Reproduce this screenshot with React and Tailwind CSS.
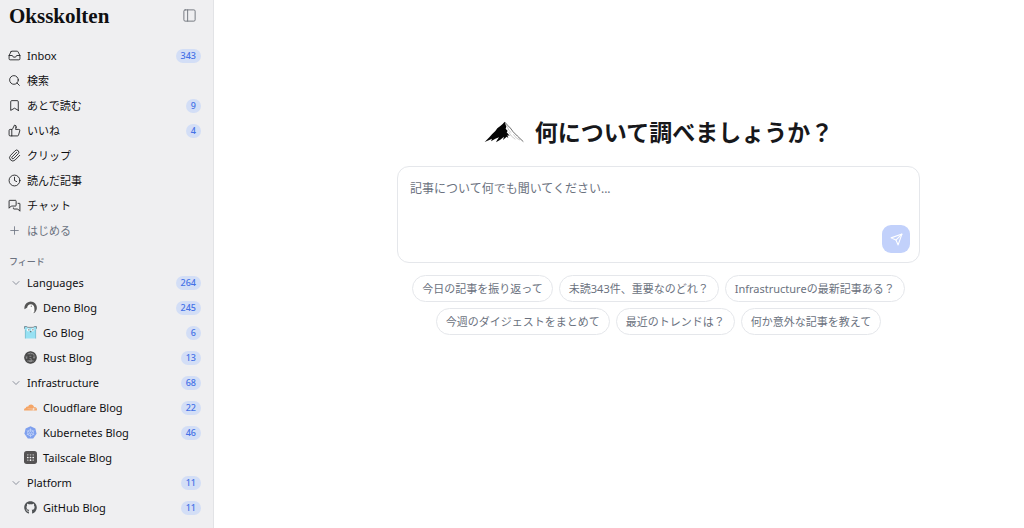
import React from 'react';
import {
  Bookmark,
  ChevronDown,
  Clock,
  Inbox,
  PanelLeft,
  Paperclip,
  Plus,
  Search,
  ThumbsUp,
} from 'lucide-react';
import { FaGithub } from 'react-icons/fa';
import { SiCloudflare, SiRust } from 'react-icons/si';

// square-cornered chat bubbles
const ChatIcon = ({ className, strokeWidth }) => (
  <svg
    viewBox="0 0 24 24"
    className={className}
    fill="none"
    stroke="currentColor"
    strokeWidth={strokeWidth}
    strokeLinecap="round"
    strokeLinejoin="round"
  >
    <path d="M15 12a1 1 0 0 1-1 1H6l-4 4V3.500a1 1 0 0 1 1-1h11a1 1 0 0 1 1 1z" />
    <path d="M18.500 8H21a1 1 0 0 1 1 1v13.500L18 18.500h-7a1 1 0 0 1-1-1V16.500" />
  </svg>
);

const SendIcon = ({ className }) => (
  <svg
    viewBox="0 0 24 24"
    className={className}
    fill="none"
    stroke="currentColor"
    strokeWidth="2"
    strokeLinecap="round"
    strokeLinejoin="round"
  >
    <path d="M22 2l-7 20-4-9-9-4z" />
    <path d="M22 2L11 13" />
  </svg>
);

const navItems = [
  { label: 'Inbox', icon: Inbox, count: 343 },
  { label: '検索', icon: Search },
  { label: 'あとで読む', icon: Bookmark, count: 9 },
  { label: 'いいね', icon: ThumbsUp, count: 4 },
  { label: 'クリップ', icon: Paperclip },
  { label: '読んだ記事', icon: Clock },
  { label: 'チャット', icon: ChatIcon },
  { label: 'はじめる', icon: Plus, muted: true },
];

const DenoIcon = () => (
  <svg viewBox="0 0 24 24" className="size-[13px]">
    <path d="M1 15a11.500 11.500 0 1 1 17 7.500L15 12H6z" fill="#555" />
    <path
      d="M6 12.500c0-4 3-6.500 6.500-6.500 4 0 6 2.500 6.500 6 .4 3 .5 5.500 0 8.500a11 11 0 0 1-5 2.500c.2-3 .2-5.500-.5-8-1.500.5-2.500.3-3.500-.5-1.500.6-4 0-4-2z"
      fill="#fafafa"
    />
    <circle cx="13.500" cy="9.500" r="1" fill="#555" />
  </svg>
);

const GopherIcon = () => (
  <svg viewBox="0 0 24 24" className="size-[13px]">
    <path d="M1 1h4l2 2h10l2-2h4v5l-1 2v15H2V8L1 6z" fill="#97e1f3" />
    <path d="M1 5V1h4l2 1.500h10L19 1h4v4" fill="none" stroke="#5b6b73" strokeWidth="1.300" />
    <path d="M2.500 7v16M21.500 7v16" stroke="#63a5b9" strokeWidth="1" />
    <circle cx="8" cy="7" r="3" fill="#eefafd" />
    <circle cx="16" cy="7" r="3" fill="#eefafd" />
    <circle cx="9" cy="7" r="1.200" fill="#555" />
    <circle cx="16.500" cy="7" r="1.200" fill="#555" />
    <path d="M11 9.500h2.500v2H11z" fill="#666" />
  </svg>
);

const RustIcon = () => (
  <svg viewBox="0 0 24 24" className="size-[13px]">
    <circle cx="12" cy="12" r="10.500" fill="#8b8b8c" />
    <SiRust size={24} color="#484848" />
  </svg>
);

const CloudflareIcon = () => <SiCloudflare className="size-[13px] text-[#f5a566]" />;

const KubernetesIcon = () => (
  <svg viewBox="0 0 24 24" className="size-[13px]">
    <path d="M12 .5l9 4.300 2.200 9.700-6.200 8.500H7L.8 14.500 3 4.800z" fill="#7fa0ee" />
    <g fill="none" stroke="#c9d8fa" strokeWidth="1.300">
      <circle cx="12" cy="12.500" r="5.500" />
      <path d="M12 4.500v16M5 8.500l14 8M5 16.500l14-8" />
    </g>
    <circle cx="12" cy="12.500" r="1.500" fill="#7fa0ee" />
  </svg>
);

const TailscaleIcon = () => (
  <svg viewBox="0 0 24 24" className="size-[13px]">
    <rect width="24" height="24" rx="5" fill="#555354" />
    <g fill="#f4f4f5">
      <circle cx="7" cy="12" r="1.600" />
      <circle cx="12" cy="12" r="1.600" />
      <circle cx="17" cy="12" r="1.600" />
      <circle cx="12" cy="17" r="1.600" />
    </g>
    <g fill="#a1a1a1">
      <circle cx="7" cy="7" r="1.600" />
      <circle cx="12" cy="7" r="1.600" />
      <circle cx="17" cy="7" r="1.600" />
      <circle cx="7" cy="17" r="1.600" />
      <circle cx="17" cy="17" r="1.600" />
    </g>
  </svg>
);

const GithubIcon = () => <FaGithub className="size-[13px] text-[#505356]" />;

const feedGroups = [
  {
    name: 'Languages',
    count: 264,
    feeds: [
      { name: 'Deno Blog', icon: DenoIcon, count: 245 },
      { name: 'Go Blog', icon: GopherIcon, count: 6 },
      { name: 'Rust Blog', icon: RustIcon, count: 13 },
    ],
  },
  {
    name: 'Infrastructure',
    count: 68,
    feeds: [
      { name: 'Cloudflare Blog', icon: CloudflareIcon, count: 22 },
      { name: 'Kubernetes Blog', icon: KubernetesIcon, count: 46 },
      { name: 'Tailscale Blog', icon: TailscaleIcon },
    ],
  },
  {
    name: 'Platform',
    count: 11,
    feeds: [{ name: 'GitHub Blog', icon: GithubIcon, count: 11 }],
  },
];

const suggestions = [
  '今日の記事を振り返って',
  '未読343件、重要なのどれ？',
  'Infrastructureの最新記事ある？',
  '今週のダイジェストをまとめて',
  '最近のトレンドは？',
  '何か意外な記事を教えて',
];

const Badge = ({ count }) => (
  <span className="ml-auto rounded-full bg-[#d3def6] px-[5px] text-[9px] leading-[14px] font-medium text-[#4471e6]">
    {count}
  </span>
);

const MountainLogo = () => (
  <svg viewBox="0 0 120 66" className="h-[22px] w-10" aria-hidden="true">
    <path
      d="M62 2L56 9 48 16 40 22 34 30 24 40 16 49 2 63 14 58 24 53 21 61 34 53 45 49 39 58 36 64 49 56 60 47 57 57 68 47 73 51 70 43 77 44 68 34 71 30 65 23 67 17z"
      fill="#050505"
    />
    <path d="M62 3l9 10 8 8 8 11 13 13 18 17" fill="none" stroke="#222" strokeWidth="2" />
    <path d="M66 12l5 7 3 8 8 8M74 33l8 12 12 10M88 40l9 11 11 6" fill="none" stroke="#888" strokeWidth="1.300" />
  </svg>
);

const Sidebar = () => (
  <aside className="w-[214px] shrink-0 border-r border-[#e2e3e6] bg-[#efeff1]">
    <div className="flex h-[31px] items-center justify-between pr-3 pl-[9px]">
      <span className="font-['Liberation_Serif',serif] text-[21px] leading-7 font-bold">Oksskolten</span>
      <button type="button" aria-label="サイドバーを閉じる" className="p-1 text-[#71757d]">
        <PanelLeft className="size-[15px]" strokeWidth={1.5} />
      </button>
    </div>

    <nav className="mt-3">
      {navItems.map(({ label, icon: Icon, count, muted }) => (
        <a
          key={label}
          href="#"
          className={`flex h-[25px] items-center gap-[6px] pr-3 pl-2 ${muted ? 'text-[#6b7280]' : ''}`}
        >
          <Icon className="size-[13px]" strokeWidth={1.5} />
          <span>{label}</span>
          {count && <Badge count={count} />}
        </a>
      ))}
    </nav>

    <h2 className="mt-[11px] pl-[9px] text-[9px] leading-4 font-medium text-[#6b7280]">フィード</h2>
    {feedGroups.map((group) => (
      <div key={group.name}>
        <button type="button" className="flex h-[25px] w-full items-center gap-[5px] pr-3 pl-[10px]">
          <ChevronDown className="size-3 text-[#6b7280]" strokeWidth={1.5} />
          <span>{group.name}</span>
          <Badge count={group.count} />
        </button>
        {group.feeds.map(({ name, icon: Icon, count }) => (
          <a key={name} href="#" className="flex h-[25px] items-center gap-[6px] pr-3 pl-6">
            <Icon />
            <span>{name}</span>
            {count && <Badge count={count} />}
          </a>
        ))}
      </div>
    ))}
  </aside>
);

const Composer = () => (
  <form
    className="flex w-full flex-col rounded-xl border border-[#e5e7eb] px-[9px] pt-3 pb-[9px]"
    onSubmit={(e) => e.preventDefault()}
  >
    <textarea
      aria-label="質問"
      rows={2}
      placeholder="記事について何でも聞いてください..."
      className="h-[46px] w-full resize-none px-[3px] text-[12px] leading-5 outline-none placeholder:text-[#6b7280]"
    />
    <button
      type="submit"
      aria-label="送信"
      className="flex size-7 items-center justify-center self-end rounded-[9px] bg-[#c2d1fb] text-white"
    >
      <SendIcon className="size-[13px]" />
    </button>
  </form>
);

const App = () => (
  <div
    lang="ja"
    className="flex min-h-screen bg-white font-['Noto_Sans','Noto_Sans_CJK_JP',sans-serif] text-[11px] leading-4 text-[#0f1012]"
  >
    <Sidebar />
    <main className="flex flex-1 flex-col items-center pt-[116px] pl-[79px]">
      <div className="flex w-full max-w-[523px] flex-col items-center">
        <h1 className="flex items-center gap-[11px] text-[23px] leading-8 font-bold text-[#17181b]">
          <MountainLogo />
          何について調べましょうか？
        </h1>
        <div className="mt-[18px] w-full">
          <Composer />
        </div>
        <div className="mt-3 flex flex-wrap justify-center gap-[6px]">
          {suggestions.map((text) => (
            <button
              key={text}
              type="button"
              className="rounded-full border border-[#e5e7eb] px-[9px] py-1 leading-[17px] text-[#6b7280]"
            >
              {text}
            </button>
          ))}
        </div>
      </div>
    </main>
  </div>
);

export default App;
